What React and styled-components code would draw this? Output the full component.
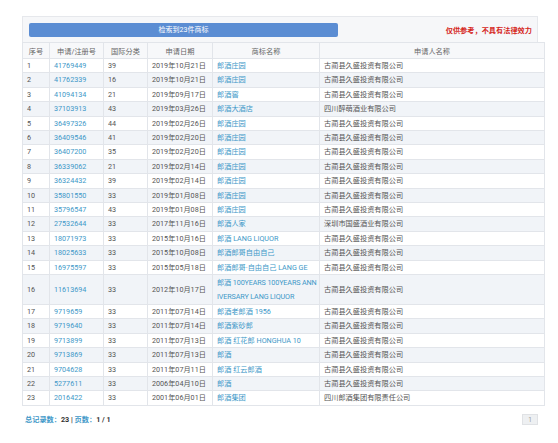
import React from "react";
import styled, { createGlobalStyle } from "styled-components";

const Global = createGlobalStyle`
  html, body { margin: 0; padding: 0; background: #fff; }
  body { font-family: Roboto, "Noto Sans CJK SC", sans-serif; }
`;

const Page = styled.div`
  padding: 16px 20px 0 22px;
  width: 516px;
`;

const TopBar = styled.div`
  display: flex;
  align-items: center;
  justify-content: space-between;
  height: 25px;
  padding: 0 5px 0 6px;
  background: #f6f7f9;
  border: 1px solid #e6e8ec;
  border-bottom: none;
`;

const SearchButton = styled.div`
  width: 309px;
  height: 14px;
  background: #5b8dd3;
  border-radius: 2px;
  color: #fff;
  font-size: 7px;
  line-height: 14px;
  text-align: center;
`;

const Notice = styled.div`
  color: #d5261b;
  font-weight: bold;
  font-size: 7.2px;
`;

const Table = styled.table`
  width: 516px;
  border-collapse: collapse;
  table-layout: fixed;
  font-size: 7.2px;
  color: #555;
`;

const Th = styled.th`
  width: ${(p) => p.$w}px;
  height: 15px;
  padding: 0;
  font-weight: normal;
  color: #666;
  background: #f7f8fa;
  border: 1px solid #e2e5ea;
  text-align: center;
`;

const Tr = styled.tr`
  background: ${(p) => (p.$alt ? "#f1f4f8" : "#fff")};
`;

const Td = styled.td`
  padding: ${(p) => (p.$tall ? "1px 2px 1px 4px" : "0 3px 0 4px")};
  letter-spacing: ${(p) => (p.$tall ? "-0.12px" : "normal")};
  line-height: 13.4px;
  border: 1px solid #e2e5ea;
  border-top: none;
  vertical-align: middle;
  white-space: nowrap;
  overflow: hidden;
  color: ${(p) => (p.$link ? "#3e98c8" : "#555")};
`;

const Footer = styled.div`
  display: flex;
  align-items: center;
  justify-content: space-between;
  margin-top: 8px;
  padding-left: 3px;
`;

const Summary = styled.div`
  font-size: 7.2px;
  font-weight: bold;
  color: #333;
`;

const Label = styled.span`
  color: #3e98c8;
`;

const PageBox = styled.div`
  width: 16px;
  height: 11px;
  background: #eef0f2;
  border: 1px solid #e0e2e5;
  box-sizing: border-box;
  color: #999;
  font-size: 6.5px;
  line-height: 10px;
  text-align: center;
`;

const A = "古蔺县久盛投资有限公司";
const rows = [
  ["41769449", "39", "2019年10月21日", "郎酒庄园", A],
  ["41762339", "16", "2019年10月21日", "郎酒庄园", A],
  ["41094134", "21", "2019年09月17日", "郎酒窖", A],
  ["37103913", "43", "2019年03月26日", "郎酒大酒店", "四川醉萌酒业有限公司"],
  ["36497326", "44", "2019年02月26日", "郎酒庄园", A],
  ["36409546", "41", "2019年02月20日", "郎酒庄园", A],
  ["36407200", "35", "2019年02月20日", "郎酒庄园", A],
  ["36339062", "21", "2019年02月14日", "郎酒庄园", A],
  ["36324432", "39", "2019年02月14日", "郎酒庄园", A],
  ["35801550", "33", "2019年01月08日", "郎酒庄园", A],
  ["35796547", "43", "2019年01月08日", "郎酒庄园", A],
  ["27532644", "33", "2017年11月16日", "郎酒人家", "深圳市国盛酒业有限公司"],
  ["18071973", "33", "2015年10月16日", "郎酒 LANG LIQUOR", A],
  ["18025633", "33", "2015年10月08日", "郎酒郎哥自由自己", A],
  ["16975597", "33", "2015年05月18日", "郎酒郎哥·自由自己 LANG GE", A],
  ["11613694", "33", "2012年10月17日", ["郎酒 100YEARS 100YEARS ANN", "IVERSARY LANG LIQUOR"], A],
  ["9719659", "33", "2011年07月14日", "郎酒老郎酒 1956", A],
  ["9719640", "33", "2011年07月14日", "郎酒紫砂郎", A],
  ["9713899", "33", "2011年07月13日", "郎酒 红花郎 HONGHUA 10", A],
  ["9713869", "33", "2011年07月13日", "郎酒", A],
  ["9704628", "33", "2011年07月11日", "郎酒 红云郎酒", A],
  ["5277611", "33", "2006年04月10日", "郎酒", A],
  ["2016422", "33", "2001年06月01日", "郎酒集团", "四川郎酒集团有限责任公司"],
];

const heads = [
  ["序号", 26],
  ["申请/注册号", 53],
  ["国际分类", 43],
  ["申请日期", 64],
  ["商标名称", 106],
  ["申请人名称", 224],
];

export default function App() {
  return (
    <Page>
      <Global />
      <TopBar>
        <SearchButton>检索到23件商标</SearchButton>
        <Notice>仅供参考，不具有法律效力</Notice>
      </TopBar>
      <Table>
        <thead>
          <tr>
            {heads.map(([h, w]) => (
              <Th key={h} $w={w}>{h}</Th>
            ))}
          </tr>
        </thead>
        <tbody>
          {rows.map((r, i) => {
            const tall = Array.isArray(r[3]);
            return (
              <Tr key={i} $alt={i % 2 === 1}>
                <Td>{i + 1}</Td>
                <Td $link>{r[0]}</Td>
                <Td>{r[1]}</Td>
                <Td>{r[2]}</Td>
                <Td $link $tall={tall}>
                  {tall ? (
                    <>
                      {r[3][0]}
                      <br />
                      {r[3][1]}
                    </>
                  ) : (
                    r[3]
                  )}
                </Td>
                <Td>{r[4]}</Td>
              </Tr>
            );
          })}
        </tbody>
      </Table>
      <Footer>
        <Summary>
          <Label>总记录数：</Label>23 | <Label>页数：</Label>1 / 1
        </Summary>
        <PageBox>1</PageBox>
      </Footer>
    </Page>
  );
}
